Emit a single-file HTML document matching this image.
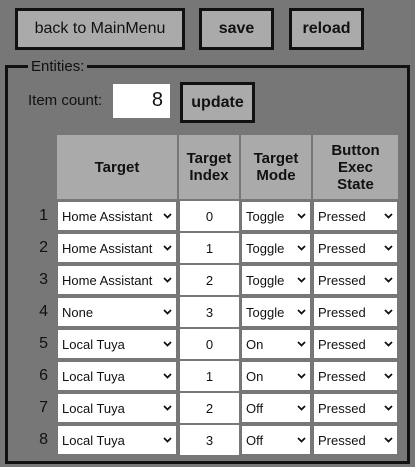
<!DOCTYPE html>
<html><head><style>
body{margin:0;width:415px;height:467px;background:#777;font-family:"Liberation Sans",Arial,sans-serif;position:relative;overflow:hidden;color:#111}
.a{position:absolute;box-sizing:border-box}
.btn{border:3px solid #111;background:#aaa;display:flex;align-items:center;justify-content:center;font-size:16px}
.b{font-weight:bold}
.h{background:#aaa;font-weight:bold;font-size:15px;text-align:center;display:flex;align-items:center;justify-content:center;line-height:17px}
.s{background:#fff;font-size:13px;display:flex;align-items:center;padding-left:4px}
.s svg{position:absolute;right:4px;top:11px}
.c{background:#fff;font-size:13px;display:flex;align-items:center;justify-content:center}
.n{font-size:16px;width:20px;text-align:right;left:28px}
</style></head><body>
<div class="a btn" style="left:15px;top:8px;width:170px;height:42px">back to MainMenu</div>
<div class="a btn b" style="left:199px;top:8px;width:75px;height:42px">save</div>
<div class="a btn b" style="left:289px;top:8px;width:75px;height:42px">reload</div>
<div class="a" style="left:5px;top:65px;width:405px;height:399px;border:3px solid #111"></div>
<div class="a" style="left:28px;top:58px;background:#777;padding:0 3px;font-size:15px">Entities:</div>
<div class="a" style="left:28px;top:92px;font-size:15px">Item count:</div>
<div class="a" style="left:113px;top:84px;width:57px;height:34px;background:#fff;font-size:20px;text-align:right;padding:5px 7px 0 0">8</div>
<div class="a btn b" style="left:180px;top:82px;width:75px;height:41px">update</div>
<div class="a h" style="left:57px;top:135px;width:120px;height:64px">Target</div>
<div class="a h" style="left:179px;top:135px;width:60px;height:64px">Target<br>Index</div>
<div class="a h" style="left:241px;top:135px;width:70px;height:64px">Target<br>Mode</div>
<div class="a h" style="left:313px;top:135px;width:85px;height:64px">Button<br>Exec<br>State</div>
<div id="rows"></div>
<script>
var t=["Home Assistant","Home Assistant","Home Assistant","None","Local Tuya","Local Tuya","Local Tuya","Local Tuya"];
var idx=[0,1,2,3,0,1,2,3];
var m=["Toggle","Toggle","Toggle","Toggle","On","On","Off","Off"];
var ch='<svg width="9" height="6" viewBox="0 0 9 6"><path d="M1 1L4.5 4.5L8 1" stroke="#111" stroke-width="1.8" fill="none"/></svg>';
var h="";
for(var i=0;i<8;i++){var y=202+i*32;
h+='<div class="a n" style="top:'+(y+5)+'px">'+(i+1)+'</div>';
h+='<div class="a s" style="left:58px;top:'+y+'px;width:118px;height:28px">'+t[i]+ch+'</div>';
h+='<div class="a c" style="left:180px;top:'+(y-1)+'px;width:59px;height:30px">'+idx[i]+'</div>';
h+='<div class="a s" style="left:242px;top:'+y+'px;width:68px;height:28px">'+m[i]+ch+'</div>';
h+='<div class="a s" style="left:314px;top:'+y+'px;width:83px;height:28px">Pressed'+ch+'</div>';}
document.getElementById("rows").innerHTML=h;
</script>
</body></html>
